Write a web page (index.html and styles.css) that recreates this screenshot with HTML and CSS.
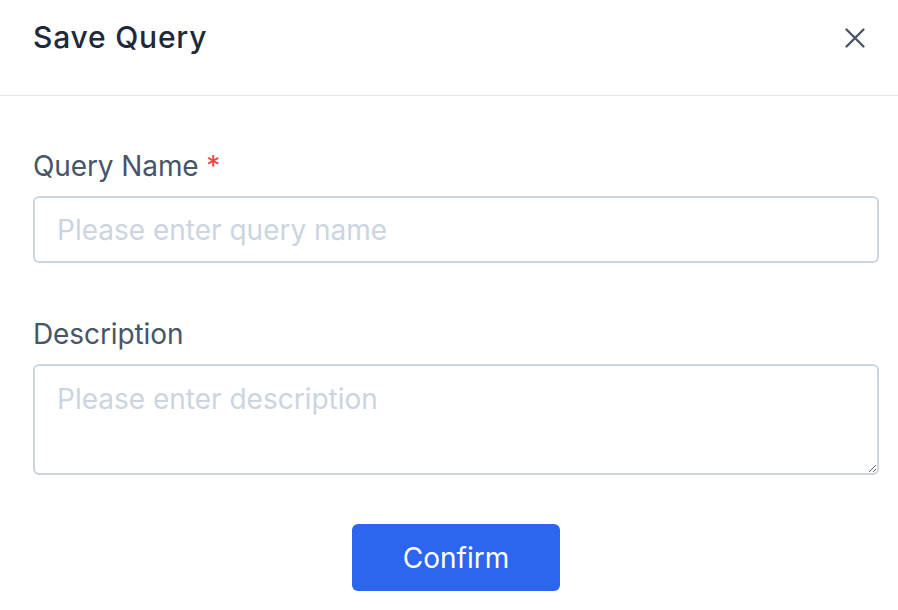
FILE: index.html
```html
<!DOCTYPE html>
<html lang="en">
<head>
<meta charset="utf-8">
<title>Save Query</title>
<link rel="stylesheet" href="styles.css">
</head>
<body>
<div class="dialog">
  <header class="dialog-header">
    <h1 class="dialog-title">Save Query</h1>
    <button class="close-btn" aria-label="Close">
      <svg width="22" height="22" viewBox="0 0 22 22" fill="none" stroke="#4b5563" stroke-width="2.4" stroke-linecap="round"><path d="M2.5 2.5L19.5 19.5M19.5 2.5L2.5 19.5"/></svg>
    </button>
  </header>
  <form class="dialog-body">
    <div class="field">
      <label class="field-label">Query Name <span class="required">*</span></label>
      <input class="text-input" type="text" placeholder="Please enter query name">
    </div>
    <div class="field">
      <label class="field-label">Description</label>
      <textarea class="text-area" placeholder="Please enter description"></textarea>
    </div>
    <div class="actions">
      <button type="button" class="primary-btn">Confirm</button>
    </div>
  </form>
</div>
</body>
</html>
```
FILE: styles.css
```css
* { box-sizing: border-box; }
html, body { margin: 0; padding: 0; background: #ffffff; }
body { font-family: Inter, "Noto Sans", sans-serif; color: #1f2937; }
.dialog { width: 898px; height: 610px; overflow: hidden; }
.dialog-header {
  height: 96px;
  border-bottom: 1px solid #e5e7eb;
  display: flex;
  align-items: flex-start;
  justify-content: space-between;
  padding: 17px 32px 0 33px;
}
.dialog-title { margin: 0; font-size: 30px; font-weight: 500; color: #1e293b; line-height: 40px; letter-spacing: 0.8px; }
.close-btn { border: 0; background: none; padding: 0; margin-top: 10px; width: 22px; height: 22px; display: flex; cursor: pointer; }
.dialog-body { padding: 50px 19px 0 33px; display: flex; flex-direction: column; }
.field { display: flex; flex-direction: column; }
.field + .field { margin-top: 51px; }
.field-label { font-size: 28px; color: #475569; line-height: 40px; margin-bottom: 10px; letter-spacing: -0.1px; }
.required { color: #ef4444; }
.text-input, .text-area {
  width: 100%;
  border: 2px solid #cbd5e1;
  border-radius: 6px;
  font-family: inherit;
  font-size: 28px;
  padding: 0 22px;
  color: #1e293b;
  outline: none;
}
.text-input { height: 67px; }
.text-area { height: 111px; padding-top: 14px; resize: vertical; line-height: 38px; }
.text-input::placeholder, .text-area::placeholder { color: #cbd5e1; }
.actions { display: flex; justify-content: center; margin-top: 49px; }
.primary-btn {
  width: 208px; height: 67px;
  background: #2b65f0;
  color: #fff;
  border: 0;
  border-radius: 6px;
  font-family: inherit;
  font-size: 28px;
}
```
